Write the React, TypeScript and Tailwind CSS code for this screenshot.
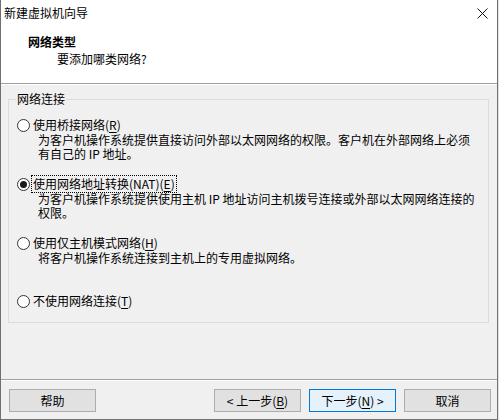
import React from "react";

const FONT = { fontFamily: '"Noto Sans CJK SC", "Noto Sans", sans-serif' };

function Radio({ checked }: { checked?: boolean }) {
  return (
    <span className="w-[13px] h-[13px] shrink-0 rounded-full border border-[#333] bg-white flex items-center justify-center">
      {checked && <span className="w-[7px] h-[7px] rounded-full bg-[#1a1a1a]" />}
    </span>
  );
}

function Option({
  label, keyChar, desc, checked, height,
}: {
  label: string;
  keyChar: string;
  desc?: string[];
  checked?: boolean;
  height: string;
}) {
  return (
    <div className={height}>
      <div className="flex items-center h-[14px]">
        <Radio checked={checked} />
        <span
          className={`ml-[3px] leading-[14px] whitespace-nowrap ${
            checked ? "outline outline-1 outline-dotted outline-black outline-offset-[1px]" : ""
          }`}
        >
          {label}(<span className="underline underline-offset-2">{keyChar}</span>)
        </span>
      </div>
      {desc && (
        <div className="pl-[21px] mt-[1px]">
          {desc.map((d, i) => (
            <div key={i} className="leading-[14px] whitespace-nowrap">{d}</div>
          ))}
        </div>
      )}
    </div>
  );
}

function Btn({ children, primary }: { children: React.ReactNode; primary?: boolean }) {
  return (
    <button
      className={`w-[87px] h-[23px] text-[12px] leading-[14px] text-black border ${
        primary ? "border-[#0078d7] bg-[#e5f1fb]" : "border-[#adadad] bg-[#e1e1e1]"
      }`}
    >
      {children}
    </button>
  );
}

export default function App() {
  return (
    <div className="w-[499px] h-[420px] bg-[#dfe3e8] text-[12px] text-black" style={FONT}>
      <div className="w-[498px] h-[420px] border-x border-b border-[#707070] bg-[#f0f0f0] flex flex-col">
        {/* title + header */}
        <div className="bg-white h-[83px] border-b border-[#a0a0a0] box-content">
          <div className="h-[27px] flex items-start justify-between pt-[6px] pl-[3px] pr-[9px]">
            <span className="leading-[14px]">新建虚拟机向导</span>
            <svg width="11" height="11" viewBox="0 0 11 11" className="mt-[2px]">
              <path d="M0.5 0.5 L10.5 10.5 M10.5 0.5 L0.5 10.5" stroke="#111" strokeWidth="1" fill="none" />
            </svg>
          </div>
          <div className="pl-[27px] pt-[8px] font-bold leading-[14px]">网络类型</div>
          <div className="pl-[56px] pt-[3px] leading-[14px]">要添加哪类网络?</div>
        </div>
        <div className="h-[1px] bg-white" />

        {/* body */}
        <div className="h-[294px] pt-[14px] px-[7px]">
          <div className="relative w-[481px] h-[224px] border border-[#dcdcdc] pt-[18px] pl-[8px]">
            <span className="absolute -top-[8px] left-[7px] px-[1px] bg-[#f0f0f0] leading-[14px]">网络连接</span>
            <Option
              height="h-[59px]"
              label="使用桥接网络"
              keyChar="R"
              desc={[
                "为客户机操作系统提供直接访问外部以太网网络的权限。客户机在外部网络上必须",
                "有自己的 IP 地址。",
              ]}
            />
            <Option
              height="h-[59px]"
              checked
              label="使用网络地址转换(NAT)"
              keyChar="E"
              desc={[
                "为客户机操作系统提供使用主机 IP 地址访问主机拨号连接或外部以太网网络连接的",
                "权限。",
              ]}
            />
            <Option
              height="h-[58px]"
              label="使用仅主机模式网络"
              keyChar="H"
              desc={["将客户机操作系统连接到主机上的专用虚拟网络。"]}
            />
            <Option height="h-[14px]" label="不使用网络连接" keyChar="T" />
          </div>
        </div>

        {/* footer */}
        <div className="border-t border-[#a0a0a0]" />
        <div className="h-[1px] bg-white" />
        <div className="flex items-start pt-[8px] pl-[8px]">
          <Btn>帮助</Btn>
          <div className="ml-[118px] flex gap-[8px]">
            <Btn>
              &lt; 上一步(<span className="underline underline-offset-2">B</span>)
            </Btn>
            <Btn primary>
              下一步(<span className="underline underline-offset-2">N</span>) &gt;
            </Btn>
            <Btn>取消</Btn>
          </div>
        </div>
      </div>
    </div>
  );
}
